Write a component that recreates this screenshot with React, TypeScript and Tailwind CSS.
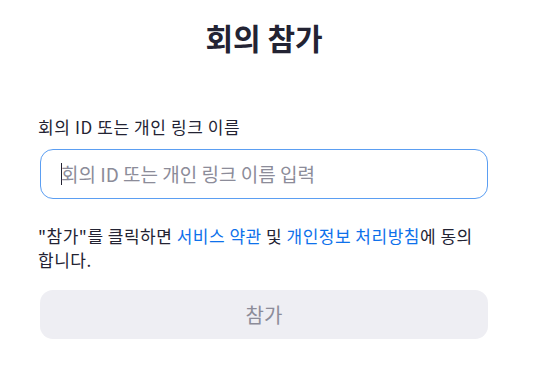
import React from 'react';

const font = { fontFamily: '"Noto Sans CJK KR", "Noto Sans", sans-serif' };

const JoinMeeting: React.FC = () => {
  return (
    <div className="w-[550px] h-[376px] bg-white text-[#232333]" style={font}>
      <div className="ml-[40px] w-[448px] flex flex-col">
        <h1 className="pt-[17px] text-center text-[30px] leading-[40px] font-bold">회의 참가</h1>

        <label className="mt-[60px] text-[17px] leading-[20px] tracking-[0.6px] -ml-[2px]">회의 ID 또는 개인 링크 이름</label>

        <div className="mt-[12px] h-[50px] rounded-[13px] border border-[#5b9ef2] flex items-center px-[20px]">
          <span className="w-px h-[22px] bg-[#232333] mr-[-1px]" />
          <input
            className="flex-1 outline-none bg-transparent text-[19px] text-[#232333] placeholder:text-[#8c8c99]"
            placeholder="회의 ID 또는 개인 링크 이름 입력"
          />
        </div>

        <p className="mt-[25px] text-[17px] leading-[24px] tracking-[0.5px] -ml-[2px]">
          "참가"를 클릭하면 <span className="text-[#0e71eb]">서비스 약관</span> 및{' '}
          <span className="text-[#0e71eb]">개인정보 처리방침</span>에 동의
          <br />
          합니다.
        </p>

        <button className="mt-[18px] h-[49px] rounded-[13px] bg-[#eeeef3] text-[20px] text-[#8c8c99]">
          참가
        </button>
      </div>
    </div>
  );
};

export default function App() {
  return <JoinMeeting />;
}
